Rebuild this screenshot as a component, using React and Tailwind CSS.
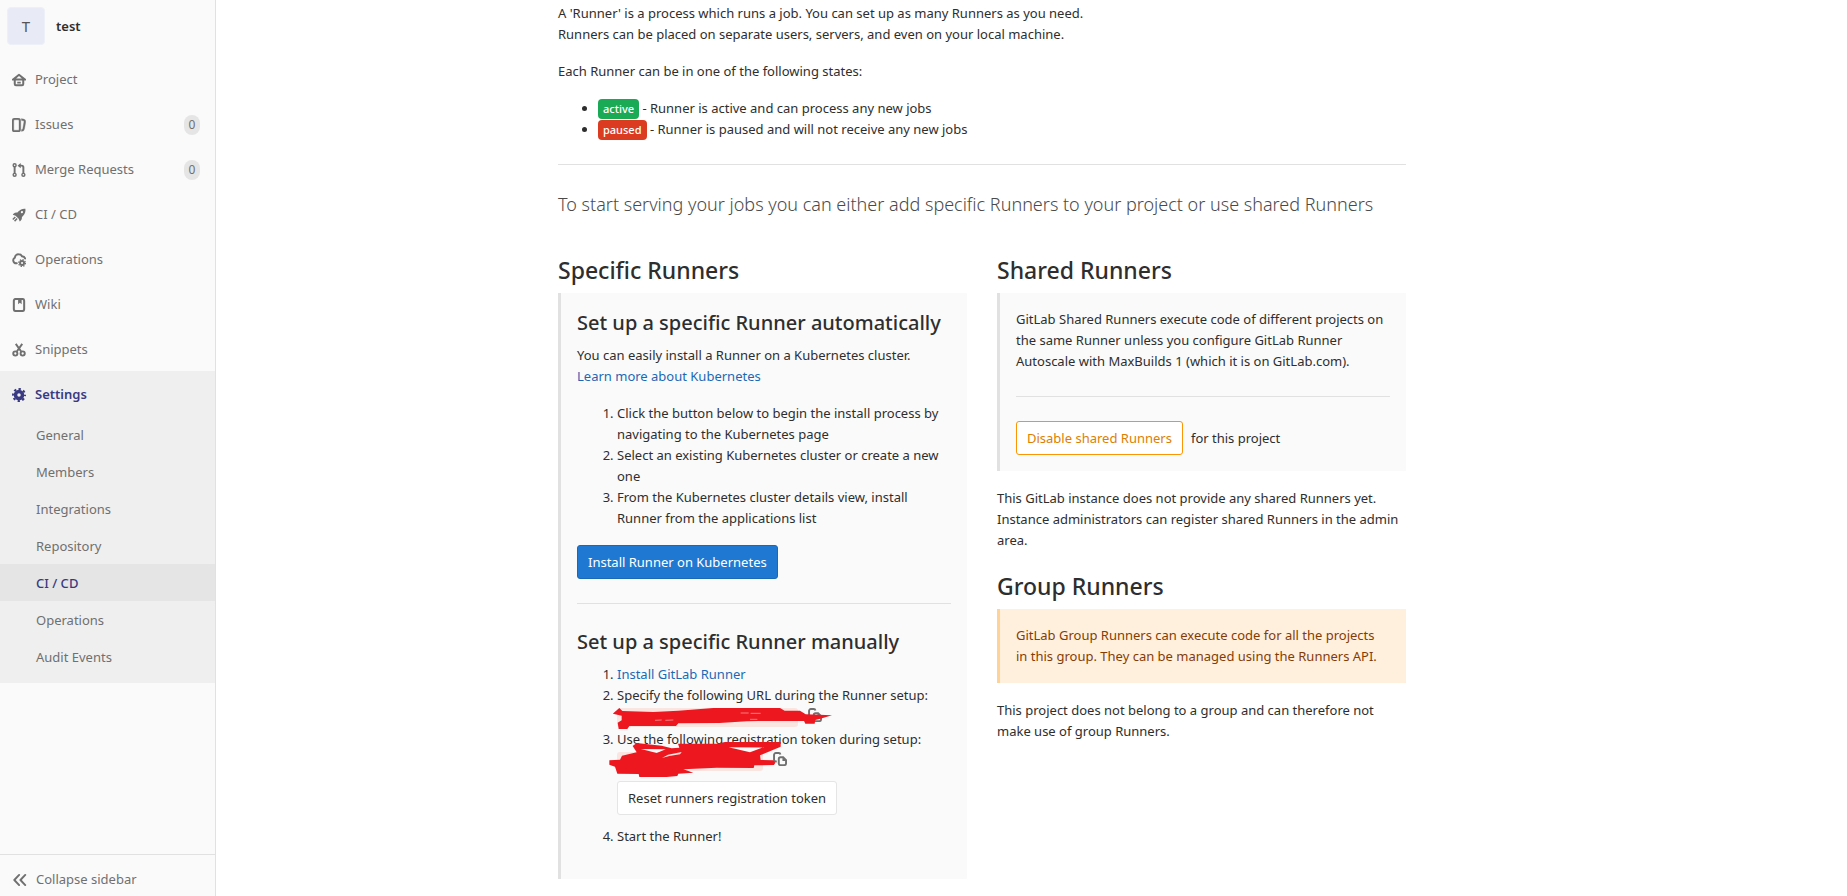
const svgProps = { viewBox: '0 0 16 16', className: 'h-[14px] w-[14px] shrink-0', 'aria-hidden': true }

const HomeIcon = () => (
  <svg {...svgProps} fill="currentColor">
    <path
      fillRule="evenodd"
      d="M8 .9a1.500 1.500 0 0 1 1 .4l6.500 5.200A1 1 0 0 1 14.900 8.600H14v3.900A2.500 2.500 0 0 1 11.500 15h-7A2.500 2.500 0 0 1 2 12.500V8.600h-.9A1 1 0 0 1 .5 6.500L7 1.300A1.500 1.500 0 0 1 8 .9zM8 3.400 4.700 6.400h6.600zM4.300 8.600v3.900a.4.4 0 0 0 .4.4h6.600a.4.4 0 0 0 .4-.4V8.600zM6 10h4v2H6z"
    />
  </svg>
)
const IssuesIcon = () => (
  <svg {...svgProps} fill="currentColor" stroke="currentColor" strokeWidth=".4">
    <path d="M10.458 15.012l.311.055a3 3 0 0 0 3.476-2.433l1.389-7.879A3 3 0 0 0 13.2 1.28L11.23.933a3.002 3.002 0 0 0-.824-.031c.364.59.58 1.28.593 2.02l1.854.328a1 1 0 0 1 .811 1.158l-1.389 7.879a1 1 0 0 1-1.158.81l-.118-.02a3.98 3.98 0 0 1-.341 1.863zM3 0h4a3 3 0 0 1 3 3v10a3 3 0 0 1-3 3H3a3 3 0 0 1-3-3V3a3 3 0 0 1 3-3zm0 2a1 1 0 0 0-1 1v10a1 1 0 0 0 1 1h4a1 1 0 0 0 1-1V3a1 1 0 0 0-1-1H3z" />
  </svg>
)
const MergeIcon = () => (
  <svg {...svgProps} fill="none" stroke="currentColor">
    <path strokeWidth="2.200" d="M3 4.500v7M13 11.500V5a2 2 0 0 0-2-2H8.500" />
    <path strokeWidth="1.600" fill="#fafafa" d="M4.700 2.500a1.700 1.700 0 1 1-3.400 0 1.700 1.700 0 0 1 3.400 0zM4.700 13.500a1.700 1.700 0 1 1-3.400 0 1.700 1.700 0 0 1 3.400 0zM14.700 13.500a1.700 1.700 0 1 1-3.400 0 1.700 1.700 0 0 1 3.400 0z" />
    <path fill="currentColor" stroke="none" d="M10 0v6L6.300 3z" />
  </svg>
)
const RocketIcon = () => (
  <svg {...svgProps} fill="currentColor">
    <path
      fillRule="evenodd"
      d="M15.300.8c.5 3.200-.5 6.200-3 8.600l-1 .9c.3 1.700-.3 3.300-1.700 4.600l-.8.600-1.200-3.100-3.500-3.600-3.200-1.200.8-.9c1.300-1.300 2.800-1.800 4.500-1.500l1-1.100C9.500 1.400 12.200.4 15.300.8zM11.500 6a1.300 1.300 0 1 0-1.400-1.400A1.300 1.300 0 0 0 11.500 6z"
    />
    <path d="M3.200 9.600l1.200 1.200-2.900 2.900-1.200-1.200zM5.300 11.400l1.200 1.200-3 3-1.200-1.200z" />
  </svg>
)
const CloudGearIcon = () => (
  <svg {...svgProps} fill="none" stroke="currentColor">
    <path strokeWidth="2.200" strokeLinecap="round" d="M5.500 11.800H4.800a3.500 3.500 0 0 1-1.500-6.600A4 4 0 0 1 7.500 1.500c2 0 3.200.8 3.900 2.200 1.700.1 3.100 1 3.600 2.600" />
    <circle cx="11.500" cy="11.500" r="2.300" strokeWidth="2.200" />
    <circle cx="11.500" cy="11.500" r="3.900" strokeWidth="1.400" strokeDasharray="1.530 1.530" />
  </svg>
)
const BookIcon = () => (
  <svg {...svgProps} fill="none" stroke="currentColor">
    <rect x="2.100" y="1.100" width="11.800" height="13.800" rx="2" strokeWidth="2.300" />
    <path fill="currentColor" stroke="none" d="M7 1h4v6L9 5.500 7 7z" />
  </svg>
)
const ScissorsIcon = () => (
  <svg {...svgProps} fill="none" stroke="currentColor" strokeWidth="2.200">
    <circle cx="3.800" cy="12" r="2.400" />
    <circle cx="12.200" cy="12" r="2.400" />
    <path d="M4.300 1l6.600 9.300M11.700 1L5.100 10.300" />
  </svg>
)
const GearIcon = () => (
  <svg {...svgProps} fill="none" stroke="currentColor">
    <circle cx="8" cy="8" r="4" strokeWidth="4" />
    <circle cx="8" cy="8" r="6.900" strokeWidth="2.200" strokeDasharray="2.710 2.710" strokeDashoffset="1.350" />
  </svg>
)
const CopyIcon = () => (
  <svg {...svgProps} fill="none" stroke="currentColor" strokeWidth="2.200">
    <path d="M4.300 10.800H3.200A2 2 0 0 1 1.200 8.800V3.200a2 2 0 0 1 2-2h3.300a2 2 0 0 1 2 1.600" />
    <path d="M8.600 5.900h3L14.900 9.200V13a2 2 0 0 1-2 2H8.600a2 2 0 0 1-2-2V7.900a2 2 0 0 1 2-2z" />
    <path fill="currentColor" stroke="none" d="M10.800 5.500v4.700h4.700z" />
  </svg>
)
const CollapseIcon = () => (
  <svg {...svgProps} fill="none" stroke="currentColor" strokeWidth="2.200" strokeLinecap="round" strokeLinejoin="round">
    <path d="M7 2.200L1.500 8 7 13.800M14 2.200L8.500 8l5.500 5.800" />
  </svg>
)

const navItems = [
  { label: 'Project', Icon: HomeIcon },
  { label: 'Issues', Icon: IssuesIcon, count: 0 },
  { label: 'Merge Requests', Icon: MergeIcon, count: 0 },
  { label: 'CI / CD', Icon: RocketIcon },
  { label: 'Operations', Icon: CloudGearIcon },
  { label: 'Wiki', Icon: BookIcon },
  { label: 'Snippets', Icon: ScissorsIcon },
]
const settingsItems = ['General', 'Members', 'Integrations', 'Repository', 'CI / CD', 'Operations', 'Audit Events']

function Sidebar() {
  return (
    <aside className="flex w-[216px] shrink-0 flex-col border-r border-[#e1e1e1] bg-[#fafafa] text-[#707070]">
      <a href="#project" className="flex items-center gap-[11px] p-[7px] font-semibold text-[#2e2e2e]">
        <span className="flex h-[38px] w-[38px] items-center justify-center rounded-sm border border-[#eef0f8] bg-[#e8eaf6] text-[15px] font-normal text-[#555]">
          T
        </span>
        test
      </a>
      <nav aria-label="Project" className="pt-1">
        <ul>
          {navItems.map(({ label, Icon, count }) => (
            <li key={label}>
              <a href="#nav" className="flex h-[45px] items-center gap-[9px] pt-0.5 pr-[15px] pl-3">
                <Icon />
                <span className="flex-1">{label}</span>
                {count !== undefined && (
                  <span className="flex h-5 w-4 items-center justify-center rounded-full bg-[#e5e5e5] text-xs">{count}</span>
                )}
              </a>
            </li>
          ))}
          <li className="bg-[#efefef] pb-2">
            <a href="#settings" className="flex h-[45px] items-center gap-[9px] pt-0.5 pl-3 font-semibold text-[#393982]">
              <GearIcon />
              Settings
            </a>
            <ul>
              {settingsItems.map((label, i) => (
                <li key={label}>
                  <a
                    href="#settings"
                    aria-current={i === 4 ? 'page' : undefined}
                    className={
                      i === 4
                        ? 'flex h-[37px] items-center bg-[#e5e5e5] pt-0.5 pl-9 font-medium text-[#393982]'
                        : 'flex h-[37px] items-center pt-0.5 pl-9'
                    }
                  >
                    {label}
                  </a>
                </li>
              ))}
            </ul>
          </li>
        </ul>
      </nav>
      <button type="button" className="mt-auto flex h-[42px] items-center gap-[9px] border-t border-[#e1e1e1] pt-2 pl-[13px]">
        <CollapseIcon />
        Collapse sidebar
      </button>
    </aside>
  )
}

const Title = ({ children }) => <h3 className="mb-2 text-[23px] leading-[30px] font-medium">{children}</h3>
const Subtitle = ({ children }) => <h4 className="mb-2 text-xl leading-7 font-medium whitespace-nowrap">{children}</h4>
const Rule = () => <hr className="my-6 border-[#e1e1e1]" />
const Panel = ({ children }) => <div className="border-l-[3px] border-[#e1e1e1] bg-[#fafafa] p-4">{children}</div>

function SpecificRunners() {
  return (
    <section>
      <Title>Specific Runners</Title>
      <Panel>
        <Subtitle>Set up a specific Runner automatically</Subtitle>
        <p>
          You can easily install a Runner on a Kubernetes cluster.
          <br />
          <a href="#kubernetes" className="text-[#1b69b6]">
            Learn more about Kubernetes
          </a>
        </p>
        <ol className="my-4 list-decimal pl-10">
          <li>Click the button below to begin the install process by navigating to the Kubernetes page</li>
          <li>Select an existing Kubernetes cluster or create a new one</li>
          <li>From the Kubernetes cluster details view, install Runner from the applications list</li>
        </ol>
        <button type="button" className="block h-[34px] rounded-[3px] border border-[#1b69b6] bg-[#1f78d1] px-[10px] text-white">
          Install Runner on Kubernetes
        </button>
        <Rule />
        <Subtitle>Set up a specific Runner manually</Subtitle>
        <ol className="mb-4 list-decimal pl-10">
          <li>
            <a href="#install" className="text-[#1b69b6]">
              Install GitLab Runner
            </a>
          </li>
          <li>
            Specify the following URL during the Runner setup:
            <div className="relative flex h-[23px] items-start gap-[10px] pt-0.5">
              <code className="h-[19px] w-[181px] rounded-[3px] bg-[#fbe5e1]" />
              <button type="button" aria-label="Copy URL" className="text-[#707070]">
                <CopyIcon />
              </button>
              <svg viewBox="219 528 660 72" className="absolute top-0 -left-1 h-6 w-[220px]" fill="#ed171f" aria-hidden="true">
                <path d="M218 551L238 534 247 543 340 546 415 542 520 534 720 534 734 542 780 542 797 553 876 556 841 566 826 570 824 581 796 581 792 573 655 573 620 574 538 579 415 580 408 588 268 588 262 597 236 597 233 578 245 571 245 557z" />
                <path fill="none" stroke="#fbe5e1" strokeWidth="1.500" d="M602 549h24M632 550h30M345 571l20-1M376 571l24-1M630 568h22" />
              </svg>
            </div>
          </li>
          <li>
            Use the following registration token during setup:
            <div className="relative flex h-[23px] items-start gap-[10px] pt-0.5">
              <code className="h-[19px] w-[146px] rounded-[3px] bg-[#fbe5e1]" />
              <button type="button" aria-label="Copy token" className="text-[#707070]">
                <CopyIcon />
              </button>
              <svg viewBox="207 636 522 108" className="absolute -top-2 -left-2 h-9 w-[174px]" fill="#ed171f" aria-hidden="true">
                <path
                  fillRule="evenodd"
                  d="M278 648L290 639 365 647 395 655 418 653 414 641 530 641 555 636 722 636 722 650 660 676 662 690 700 691 706 698 702 705 643 706 641 714 530 713 430 718 460 728 415 731 412 738 380 741 298 741 296 732 232 731 225 710 208 704 208 691 240 689 246 677 290 667zM303 657L350 669 377 658zM366 684L384 674 425 666 420 673 388 678zM566 652L630 667 672 651z"
                />
              </svg>
            </div>
            <button type="button" className="mt-2 mb-[11px] block h-[34px] rounded-[3px] border border-[#e5e5e5] bg-white px-[10px]">
              Reset runners registration token
            </button>
          </li>
          <li>Start the Runner!</li>
        </ol>
      </Panel>
    </section>
  )
}

export default function App() {
  return (
    <div className="flex min-h-screen bg-white font-['Noto_Sans','Open_Sans',sans-serif] text-[13px] leading-[21px] text-[#2e2e2e]">
      <Sidebar />
      <main className="min-w-0 flex-1">
        <div className="mx-auto max-w-[1279px] px-4">
          <div className="ml-[150px] max-w-[848px] pt-[3px]">
            <p>
              A 'Runner' is a process which runs a job. You can set up as many Runners as you need.
              <br />
              Runners can be placed on separate users, servers, and even on your local machine.
            </p>
            <p className="mt-4">Each Runner can be in one of the following states:</p>
            <ul className="mt-4 list-disc pl-10">
              <li>
                <span className="inline-block rounded bg-[#1aaa55] px-[5px] text-[11px] leading-5 font-medium text-white">active</span> - Runner is
                active and can process any new jobs
              </li>
              <li>
                <span className="inline-block rounded bg-[#db3b21] px-[5px] text-[11px] leading-5 font-medium text-white">paused</span> - Runner is
                paused and will not receive any new jobs
              </li>
            </ul>
            <Rule />
            <p className="text-lg leading-[30px] font-light text-[#4a4a4a]">
              To start serving your jobs you can either add specific Runners to your project or use shared Runners
            </p>
            <div className="mt-9 grid grid-cols-2 gap-[30px]">
              <SpecificRunners />
              <div>
                <section>
                  <Title>Shared Runners</Title>
                  <Panel>
                    <p>
                      GitLab Shared Runners execute code of different projects on the same Runner unless you configure GitLab Runner Autoscale with
                      MaxBuilds 1 (which it is on GitLab.com).
                    </p>
                    <Rule />
                    <div className="flex items-center gap-2">
                      <button type="button" className="h-[34px] rounded-[3px] border border-[#fc9403] bg-white px-[10px] text-[#de7e00]">
                        Disable shared Runners
                      </button>
                      for this project
                    </div>
                  </Panel>
                  <p className="mt-[17px]">
                    This GitLab instance does not provide any shared Runners yet. Instance administrators can register shared Runners in the admin
                    area.
                  </p>
                </section>
                <section className="mt-5">
                  <Title>Group Runners</Title>
                  <div className="border-l-[3px] border-[#ffd297] bg-[#fff0de] p-4 text-[#853c04]">
                    GitLab Group Runners can execute code for all the projects
                    <br />
                    in this group. They can be managed using the Runners API.
                  </div>
                  <p className="mt-[17px]">This project does not belong to a group and can therefore not make use of group Runners.</p>
                </section>
              </div>
            </div>
          </div>
        </div>
      </main>
    </div>
  )
}
